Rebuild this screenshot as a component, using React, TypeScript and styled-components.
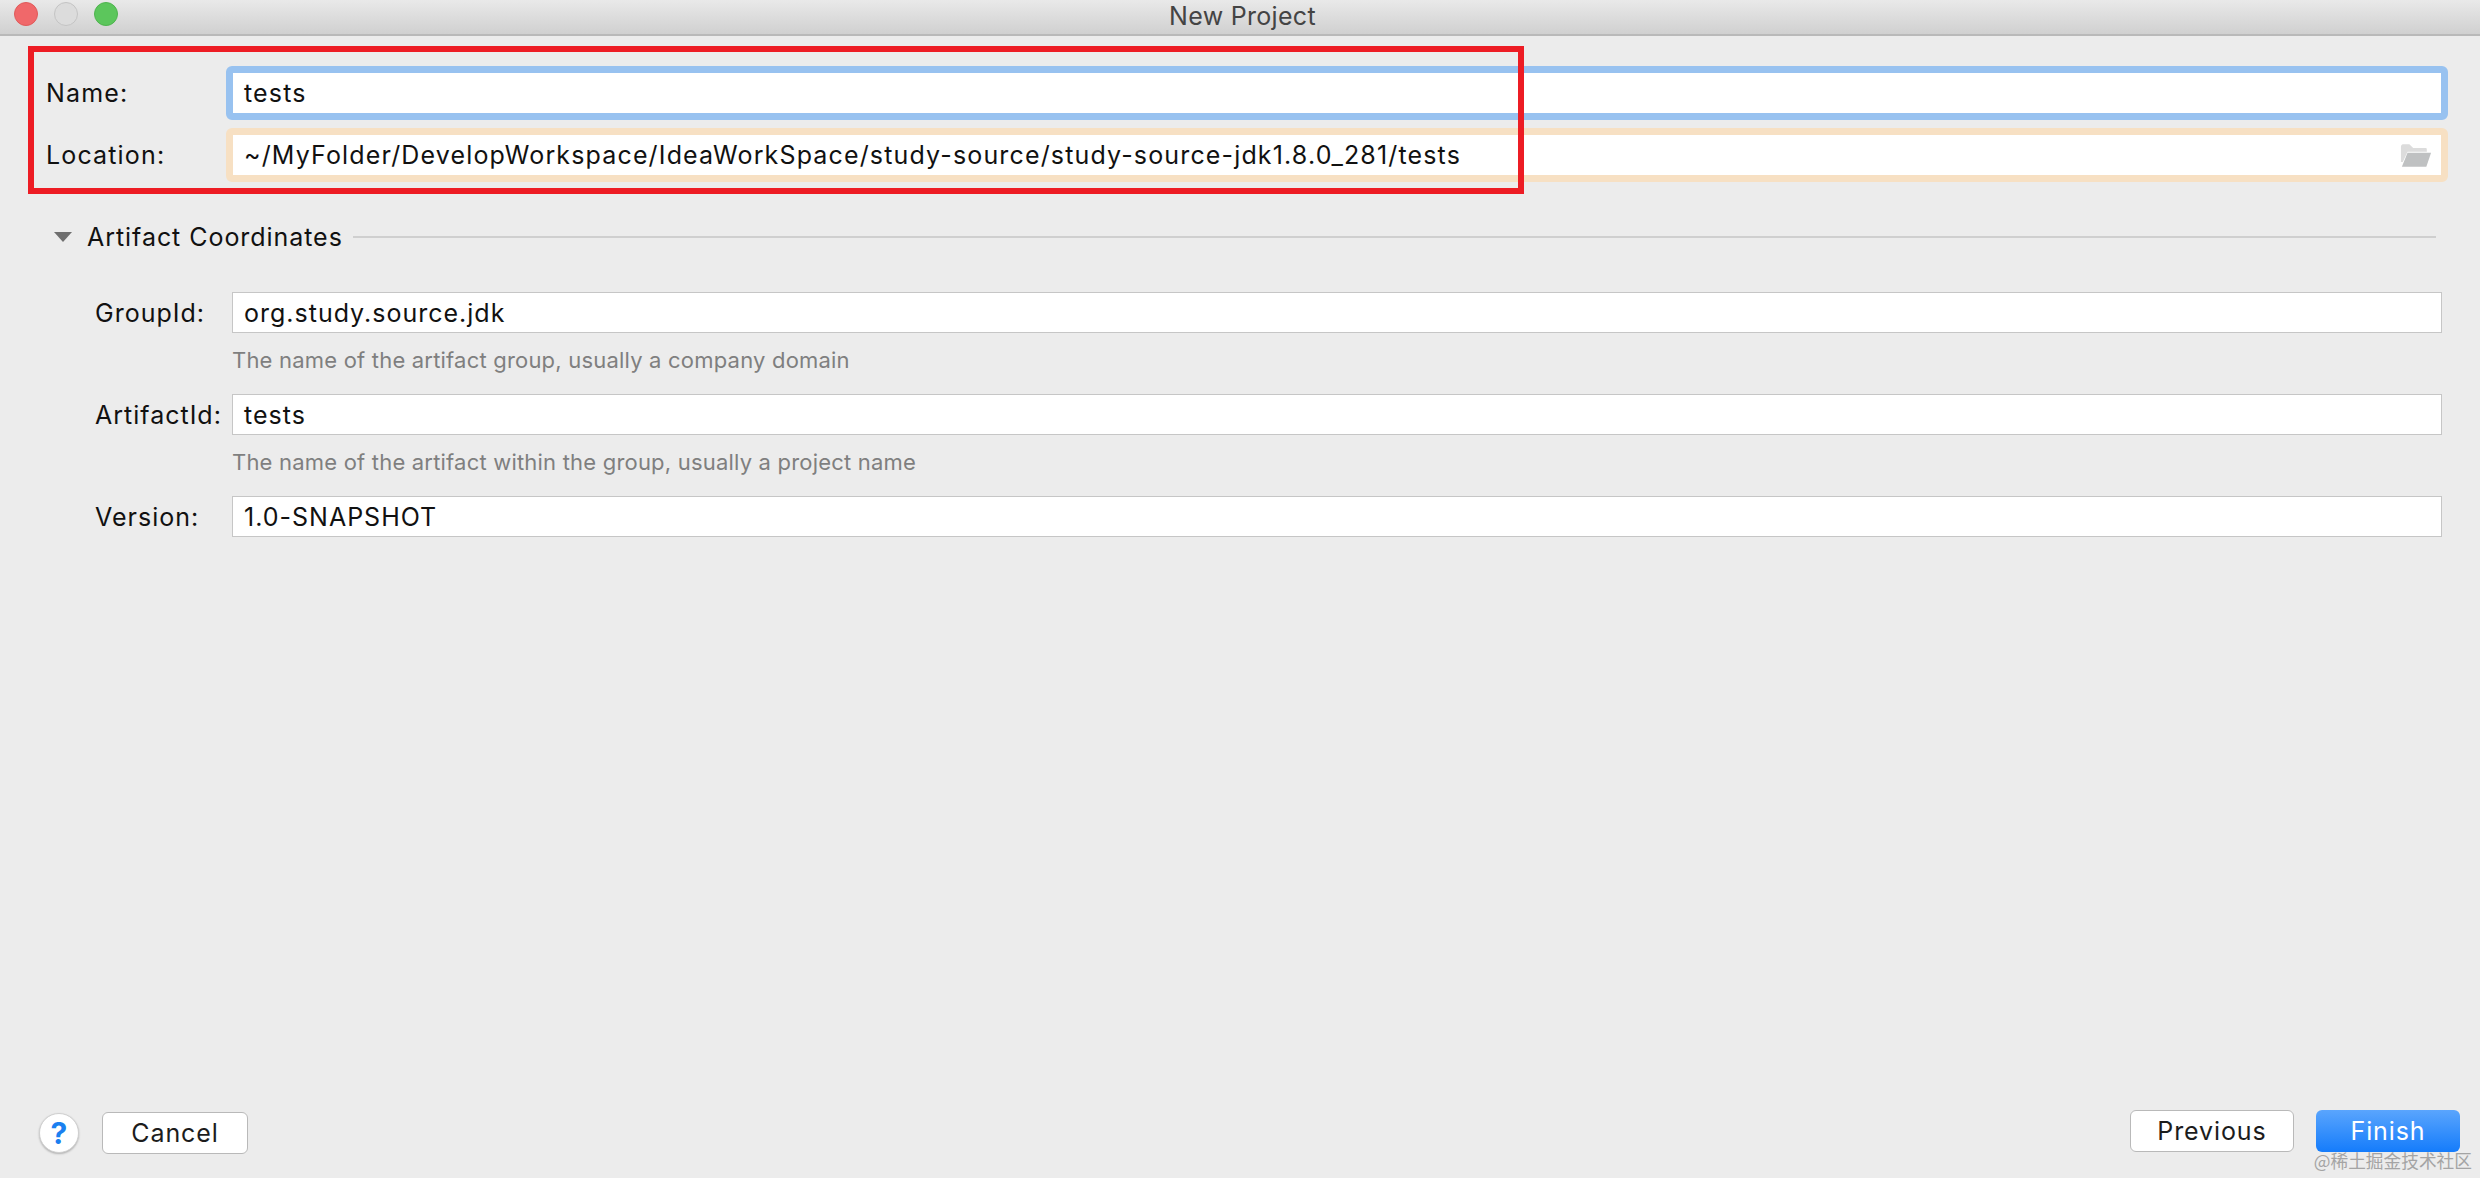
import React from "react";
import styled, { createGlobalStyle } from "styled-components";

const Global = createGlobalStyle`
  html, body { margin: 0; padding: 0; background: #ececec; }
  * { box-sizing: border-box; }
`;

const Window = styled.div`
  position: relative;
  width: 2480px;
  height: 1178px;
  display: flex;
  flex-direction: column;
  background: #ececec;
  font-family: Inter, "Noto Sans", sans-serif;
  font-size: 25px;
  letter-spacing: 1px;
  color: #111;
  overflow: hidden;
`;

const TitleBar = styled.header`
  position: relative;
  flex: none;
  height: 36px;
  display: flex;
  align-items: center;
  justify-content: center;
  padding: 0 0 3px 5px;
  background: linear-gradient(#e9e9e9, #d0d0d0);
  border-bottom: 2px solid #b9b9b9;
  color: #444;
  font-size: 25px;
  letter-spacing: 0.3px;
`;

const Lights = styled.div`
  position: absolute;
  left: 14px;
  top: 2px;
  display: flex;
  gap: 16px;
`;

const Light = styled.span<{ $fill: string; $edge: string }>`
  width: 24px;
  height: 24px;
  border-radius: 50%;
  background: ${(p) => p.$fill};
  border: 1px solid ${(p) => p.$edge};
`;

const Form = styled.main`
  flex: 1;
  display: flex;
  flex-direction: column;
  padding: 30px 32px 0 46px;
`;

const TopRow = styled.div`
  display: flex;
  align-items: center;
  height: 54px;
  margin-bottom: 8px;
  letter-spacing: 1.15px;
`;

const TopLabel = styled.label`
  flex: none;
  width: 180px;
`;

const RingField = styled.div<{ $ring: string }>`
  flex: 1;
  height: 54px;
  display: flex;
  align-items: center;
  justify-content: space-between;
  padding: 0 9px 0 11px;
  background: #fff;
  border: 7px solid ${(p) => p.$ring};
  border-radius: 6px;
`;

const SectionHeader = styled.div`
  display: flex;
  align-items: center;
  height: 30px;
  margin: 32px 12px 40px 8px;
  letter-spacing: 0.95px;
`;

const Triangle = styled.span`
  flex: none;
  width: 0;
  height: 0;
  border-left: 9px solid transparent;
  border-right: 9px solid transparent;
  border-top: 10px solid #6f6f6f;
  margin-right: 15px;
`;

const SectionLine = styled.span`
  flex: 1;
  height: 2px;
  margin-left: 10px;
  background: #cfcfcf;
`;

const FieldRow = styled.div`
  display: flex;
  align-items: center;
  height: 41px;
  padding-left: 49px;
  margin-right: 6px;
`;

const FieldLabel = styled.label`
  flex: none;
  width: 137px;
`;

const PlainField = styled.div`
  flex: 1;
  height: 41px;
  display: flex;
  align-items: center;
  padding: 0 11px;
  background: #fff;
  border: 1px solid #c6c6c6;
`;

const Hint = styled.div`
  height: 61px;
  padding: 12px 0 0 186px;
  font-size: 22px;
  line-height: 30px;
  letter-spacing: 0.2px;
  color: #7f7f7f;
`;

const Footer = styled.footer`
  flex: none;
  display: flex;
  justify-content: space-between;
  align-items: flex-start;
  height: 68px;
  padding: 0 20px 0 39px;
`;

const LeftActions = styled.div`
  display: flex;
  align-items: center;
  gap: 23px;
  padding-top: 2px;
`;

const RightActions = styled.div`
  display: flex;
  gap: 22px;
`;

const HelpButton = styled.button`
  width: 40px;
  height: 40px;
  padding: 0;
  border-radius: 50%;
  border: 1px solid #d0d0d0;
  background: #fff;
  box-shadow: 0 1px 2px rgba(0, 0, 0, 0.25);
  color: #1a80f0;
  font: 700 30px Inter, sans-serif;
`;

const Button = styled.button<{ $width: number; $primary?: boolean }>`
  width: ${(p) => p.$width}px;
  height: 42px;
  padding: 0;
  border-radius: 6px;
  font-family: Inter, sans-serif;
  font-size: 25px;
  letter-spacing: 0.9px;
  border: ${(p) => (p.$primary ? "none" : "1px solid #b9b9b9")};
  background: ${(p) => (p.$primary ? "linear-gradient(#5aa5fd, #157cfb)" : "#fff")};
  color: ${(p) => (p.$primary ? "#fff" : "#1c1c1c")};
`;

const Highlight = styled.div`
  position: absolute;
  left: 28px;
  top: 46px;
  width: 1496px;
  height: 148px;
  border: 6px solid #ed1c24;
  pointer-events: none;
`;

const Watermark = styled.div`
  position: absolute;
  right: 8px;
  bottom: 7px;
  font-family: "Noto Sans CJK SC", sans-serif;
  font-size: 17.7px;
  line-height: 22px;
  letter-spacing: 0;
  color: #a4a4a4;
`;

const FolderIcon = () => (
  <svg width="32" height="25" viewBox="0 0 34 26" aria-hidden="true">
    <path d="M1 3.5C1 1.500 2.500 1 4 1h6l4 4h13c1 0 1.500.5 1.500 1.500V9H8L3 20H1z" fill="#dcdcdc" />
    <path d="M8 10h25l-5 15H2z" fill="#bfc1c2" />
  </svg>
);

export default function App() {
  return (
    <Window>
      <Global />
      <TitleBar>
        <Lights>
          <Light $fill="#f0686a" $edge="#e05a5a" />
          <Light $fill="#dcdcdc" $edge="#c4c4c4" />
          <Light $fill="#5cc65c" $edge="#4fb44f" />
        </Lights>
        New Project
      </TitleBar>
      <Form>
        <TopRow>
          <TopLabel>Name:</TopLabel>
          <RingField $ring="#98c2f0">tests</RingField>
        </TopRow>
        <TopRow>
          <TopLabel>Location:</TopLabel>
          <RingField $ring="#f7e0c3">
            ~/MyFolder/DevelopWorkspace/IdeaWorkSpace/study-source/study-source-jdk1.8.0_281/tests
            <FolderIcon />
          </RingField>
        </TopRow>
        <SectionHeader>
          <Triangle />
          Artifact Coordinates
          <SectionLine />
        </SectionHeader>
        <FieldRow>
          <FieldLabel>GroupId:</FieldLabel>
          <PlainField>org.study.source.jdk</PlainField>
        </FieldRow>
        <Hint>The name of the artifact group, usually a company domain</Hint>
        <FieldRow>
          <FieldLabel>ArtifactId:</FieldLabel>
          <PlainField>tests</PlainField>
        </FieldRow>
        <Hint>The name of the artifact within the group, usually a project name</Hint>
        <FieldRow>
          <FieldLabel>Version:</FieldLabel>
          <PlainField>1.0-SNAPSHOT</PlainField>
        </FieldRow>
      </Form>
      <Footer>
        <LeftActions>
          <HelpButton>?</HelpButton>
          <Button $width={146}>Cancel</Button>
        </LeftActions>
        <RightActions>
          <Button $width={164}>Previous</Button>
          <Button $width={144} $primary>Finish</Button>
        </RightActions>
      </Footer>
      <Highlight />
      <Watermark>@稀土掘金技术社区</Watermark>
    </Window>
  );
}
